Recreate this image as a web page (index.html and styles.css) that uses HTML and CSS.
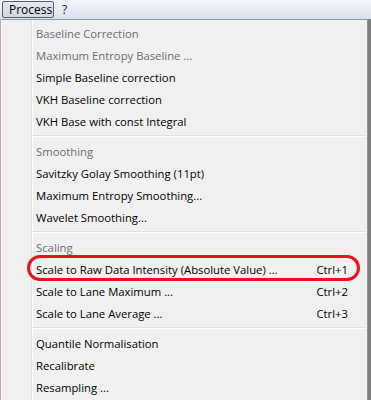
FILE: index.html
```html
<!DOCTYPE html>
<html>
<head>
<meta charset="utf-8">
<link rel="stylesheet" href="styles.css">
</head>
<body>
<div class="menubar">
  <span class="menu-btn">Process</span>
  <span class="menu-q">?</span>
</div>
<div class="dropdown">
  <div class="item disabled">Baseline Correction</div>
  <div class="item disabled">Maximum Entropy Baseline ...</div>
  <div class="item">Simple Baseline correction</div>
  <div class="item">VKH Baseline correction</div>
  <div class="item">VKH Base with const Integral</div>
  <div class="sep"></div>
  <div class="item disabled">Smoothing</div>
  <div class="item">Savitzky Golay Smoothing (11pt)</div>
  <div class="item">Maximum Entropy Smoothing...</div>
  <div class="item">Wavelet Smoothing...</div>
  <div class="sep"></div>
  <div class="item disabled">Scaling</div>
  <div class="item highlight"><span class="label">Scale to Raw Data Intensity (Absolute Value) ...</span><span class="key">Ctrl+1</span><span class="ring"></span></div>
  <div class="item"><span class="label">Scale to Lane Maximum ...</span><span class="key">Ctrl+2</span></div>
  <div class="item"><span class="label">Scale to Lane Average ...</span><span class="key">Ctrl+3</span></div>
  <div class="sep"></div>
  <div class="item">Quantile Normalisation</div>
  <div class="item">Recalibrate</div>
  <div class="item">Resampling ...</div>
</div>
</body>
</html>
```
FILE: styles.css
```css
html, body {
  margin: 0;
  padding: 0;
}
body {
  width: 371px;
  height: 400px;
  overflow: hidden;
  background: #c9a3a3;
  font-family: "Open Sans", "Noto Sans", sans-serif;
  font-size: 11.3px;
  color: #000;
}
.menubar {
  height: 19px;
  background: linear-gradient(#f4f6fb, #d9e1f0);
  display: flex;
  align-items: center;
  gap: 8px;
  padding-left: 2px;
  box-sizing: border-box;
  font-size: 12px;
}
.menu-btn {
  height: 17px;
  box-sizing: border-box;
  border: 1px solid #5e5e5e;
  border-radius: 2px;
  background: linear-gradient(#e4e8f0, #d2d8e4);
  padding: 0 0 0 6px;
  display: flex;
  align-items: center;
  width: 52px;
}
.menu-q {
  color: #101040;
}
.dropdown {
  margin-left: 1px;
  width: 367px;
  height: 381px;
  box-sizing: border-box;
  background: #f0f0f0;
  border-top: 1px solid #979797;
  border-left: 1px solid #f8f8f8;
  border-right: 1px solid #979797;
  padding-top: 2px;
  position: relative;
  box-shadow: 3px 0 0 #7f7f7f;
}
.dropdown::before {
  content: "";
  position: absolute;
  left: 29px;
  top: 0;
  bottom: 0;
  width: 1px;
  background: #e2e3e3;
  border-right: 1px solid #fff;
}
.item {
  height: 22px;
  display: flex;
  align-items: center;
  padding-left: 34px;
  padding-right: 19px;
  position: relative;
}
.item .label {
  flex: 1;
}
.disabled {
  color: #6d6d6d;
}
.sep {
  height: 8px;
  margin-left: 30px;
  position: relative;
}
.sep::after {
  content: "";
  position: absolute;
  left: 0;
  right: 1px;
  top: 3px;
  height: 1px;
  background: #e0e0e0;
  border-bottom: 1px solid #fff;
}
.ring {
  position: absolute;
  left: 25px;
  top: -3px;
  width: 333px;
  height: 26px;
  box-sizing: border-box;
  border: 3px solid #e8121b;
  border-radius: 13px;
}
```
